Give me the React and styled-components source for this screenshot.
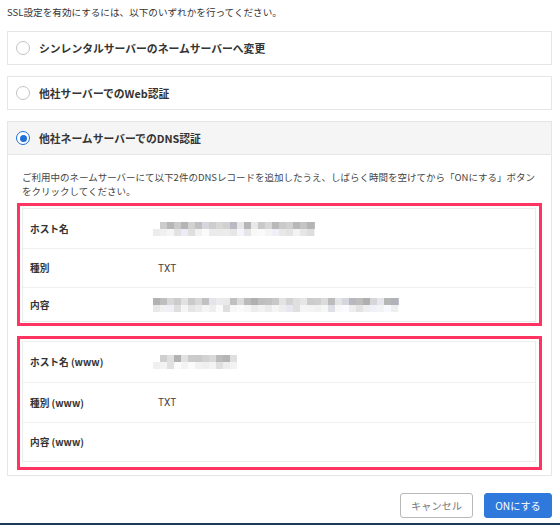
import React from "react";
import styled, { createGlobalStyle } from "styled-components";

const Global = createGlobalStyle`
  html, body { margin: 0; padding: 0; background: #fff; }
  body { font-family: "Noto Sans CJK JP", "Noto Sans", sans-serif; color: #333; }
  * { box-sizing: border-box; }
`;

const Page = styled.div`
  width: 560px;
  height: 525px;
  display: flex;
  flex-direction: column;
  padding: 5px 8px 0 7px;
  position: relative;
`;

const Lead = styled.p`
  margin: 0 0 12px;
  font-size: 9.6px;
  line-height: 14px;
  color: #333;
`;

const Card = styled.div`
  border: 1px solid #e6e6e6;
  margin-bottom: 11px;
  background: #fff;
`;

const CardHead = styled.div`
  height: ${(p) => (p.$active ? "33px" : "32px")};
  display: flex;
  align-items: center;
  gap: 9px;
  padding-left: 8px;
  background: ${(p) => (p.$active ? "#f5f5f5" : "#fff")};
  border-bottom: ${(p) => (p.$active ? "1px solid #e6e6e6" : "none")};
`;

const Radio = styled.span`
  width: 14px;
  height: 14px;
  border-radius: 50%;
  border: ${(p) => (p.$checked ? "1.5px solid #1f6fd6" : "1px solid #c4c4c4")};
  display: flex;
  align-items: center;
  justify-content: center;
  background: #fff;
  &::after {
    content: "";
    display: ${(p) => (p.$checked ? "block" : "none")};
    width: 7px;
    height: 7px;
    border-radius: 50%;
    background: #1f6fd6;
  }
`;

const HeadLabel = styled.span`
  font-size: 10.8px;
  font-weight: 700;
  color: #333;
`;

const CardBody = styled.div`
  padding: 15px 9px 5px 9px;
`;

const Desc = styled.p`
  margin: 0 0 5px 5px;
  font-size: 9.5px;
  line-height: 14px;
  color: #444;
`;

const Highlight = styled.div`
  border: 3px solid #ff3460;
  padding: 2px 3px ${(p) => (p.$extra ? "5px" : "1px")} 2px;
  margin-bottom: 10px;
  &:last-child { margin-bottom: 0; }
`;

const Table = styled.div`
  border: 1px solid #ececec;
  display: flex;
  flex-direction: column;
`;

const Row = styled.div`
  height: ${(p) => p.$h || 39}px;
  display: grid;
  grid-template-columns: 128px 1fr;
  align-items: center;
  padding-left: 7px;
  border-top: 1px solid #f0f0f0;
  &:first-child { border-top: none; }
`;

const Label = styled.span`
  font-size: 9.7px;
  font-weight: 700;
  color: #333;
  font-family: "Noto Sans CJK JP", "Roboto", sans-serif;
`;

const Value = styled.span`
  font-size: 10px;
  color: #444;
  font-family: "Roboto", "Noto Sans CJK JP", sans-serif;
  display: flex;
  align-items: center;
`;

const Footer = styled.div`
  display: flex;
  justify-content: flex-end;
  gap: 11px;
  margin-top: 6px;
`;

const Button = styled.button`
  height: 25px;
  padding: 0;
  width: ${(p) => (p.$primary ? "68px" : "73px")};
  border-radius: 3px;
  font-family: "Noto Sans CJK JP", "Roboto", sans-serif;
  font-size: 10.2px;
  border: 1px solid ${(p) => (p.$primary ? "#2f79dc" : "#b9b9b9")};
  background: ${(p) => (p.$primary ? "#2f79dc" : "#fff")};
  color: ${(p) => (p.$primary ? "#fff" : "#777")};
  cursor: pointer;
`;

const BottomBar = styled.div`
  position: absolute;
  left: 0;
  right: 0;
  bottom: 0;
  height: 2px;
  background: #1d3a5c;
`;

function rand(seed) {
  let s = seed;
  return () => {
    s = (s * 9301 + 49297) % 233280;
    return s / 233280;
  };
}

function Mosaic({ width, seed, offset = 0 }) {
  const r = rand(seed);
  const cell = 7;
  const cols = Math.ceil(width / cell);
  const rects = [];
  for (let row = 0; row < 2; row++) {
    for (let c = 0; c < cols; c++) {
      if (row === 0 && c * cell < offset) continue;
      const v = r();
      let g;
      if (row === 0) g = Math.round(175 + v * 60);
      else g = Math.round(222 + v * 30);
      const tint = r() < 0.15 ? 8 : 0;
      rects.push(
        <rect
          key={row + "-" + c}
          x={c * cell}
          y={row * cell}
          width={cell}
          height={cell}
          fill={`rgb(${g},${g},${Math.min(255, g + tint)})`}
        />
      );
    }
  }
  return (
    <svg width={width} height={14} viewBox={`0 0 ${width} 14`} style={{ display: "block" }}>
      {rects}
    </svg>
  );
}

const MosaicWrap = styled.span`
  margin-left: -5px;
  display: block;
`;

export default function App() {
  return (
    <>
      <Global />
      <Page>
        <Lead>SSL設定を有効にするには、以下のいずれかを行ってください。</Lead>
        <Card>
          <CardHead>
            <Radio />
            <HeadLabel>シンレンタルサーバーのネームサーバーへ変更</HeadLabel>
          </CardHead>
        </Card>
        <Card>
          <CardHead>
            <Radio />
            <HeadLabel>他社サーバーでのWeb認証</HeadLabel>
          </CardHead>
        </Card>
        <Card>
          <CardHead $active>
            <Radio $checked />
            <HeadLabel>他社ネームサーバーでのDNS認証</HeadLabel>
          </CardHead>
          <CardBody>
            <Desc>
              ご利用中のネームサーバーにて以下2件のDNSレコードを追加したうえ、しばらく時間を空けてから「ONにする」ボタン
              <br />
              をクリックしてください。
            </Desc>
            <Highlight>
              <Table>
                <Row>
                  <Label>ホスト名</Label>
                  <Value>
                    <MosaicWrap>
                      <Mosaic width={162} seed={7} offset={7} />
                    </MosaicWrap>
                  </Value>
                </Row>
                <Row $h={39}>
                  <Label>種別</Label>
                  <Value>TXT</Value>
                </Row>
                <Row $h={34}>
                  <Label>内容</Label>
                  <Value>
                    <MosaicWrap>
                      <Mosaic width={246} seed={21} />
                    </MosaicWrap>
                  </Value>
                </Row>
              </Table>
            </Highlight>
            <Highlight $extra>
              <Table>
                <Row $h={40}>
                  <Label>ホスト名 (www)</Label>
                  <Value>
                    <MosaicWrap>
                      <Mosaic width={84} seed={33} offset={7} />
                    </MosaicWrap>
                  </Value>
                </Row>
                <Row $h={40}>
                  <Label>種別 (www)</Label>
                  <Value>TXT</Value>
                </Row>
                <Row>
                  <Label>内容 (www)</Label>
                  <Value />
                </Row>
              </Table>
            </Highlight>
          </CardBody>
        </Card>
        <Footer>
          <Button>キャンセル</Button>
          <Button $primary>ONにする</Button>
        </Footer>
        <BottomBar />
      </Page>
    </>
  );
}
